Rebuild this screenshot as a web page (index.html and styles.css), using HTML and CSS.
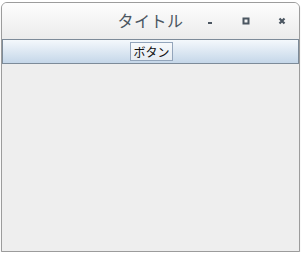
FILE: index.html
```html
<!DOCTYPE html>
<html lang="ja">
<head>
    <meta charset="UTF-8">
    <title>タイトル</title>
    <link rel="stylesheet" href="styles.css">
</head>
<body>
    <div class="window">
        <div class="titlebar">
            <span></span>
            <span class="title">タイトル</span>
            <div class="controls">
                <svg class="ctl" width="8" height="8" viewBox="0 0 8 8"><rect x="2" y="5" width="4" height="2" fill="#4b5661"/></svg>
                <svg class="ctl" width="8" height="8" viewBox="0 0 8 8"><rect x="1.5" y="1.5" width="5" height="5" fill="none" stroke="#4b5661" stroke-width="2"/></svg>
                <svg class="ctl" width="8" height="8" viewBox="0 0 8 8"><path d="M1.5 1.5 L6.5 6.5 M6.5 1.5 L1.5 6.5" stroke="#4b5661" stroke-width="2.2"/></svg>
            </div>
        </div>
        <div class="toolbar">
            <button class="btn">ボタン</button>
        </div>
        <div class="content"></div>
    </div>
</body>
</html>
```

FILE: styles.css
```css
body {
    margin: 0;
    background-color: #ffffff;
    font-family: "Noto Sans CJK JP", "DejaVu Sans", sans-serif;
}

.window {
    margin: 2px 1px 0 1px;
    width: 297px;
    height: 248px;
    border: 1px solid #9c9c9c;
    border-radius: 6px 6px 0 0;
    background-color: #eeeeee;
    box-shadow: 0 1px 1px rgba(0, 0, 0, 0.25);
    display: flex;
    flex-direction: column;
    overflow: hidden;
}

.titlebar {
    height: 36px;
    display: grid;
    grid-template-columns: 1fr auto 1fr;
    align-items: center;
    background: linear-gradient(#fdfdfd, #ebebeb);
}

.title {
    font-size: 16px;
    color: #4b5661;
    letter-spacing: 0.5px;
    line-height: 1;
    padding-bottom: 3px;
}

.controls {
    display: flex;
    justify-content: flex-end;
    align-items: center;
    gap: 28px;
    padding-right: 13px;
}

.ctl {
    display: block;
}

.toolbar {
    height: 23px;
    border: 1px solid #7d8b99;
    background: linear-gradient(#f4f8fc, #c5d7e9);
    display: flex;
    justify-content: center;
    align-items: center;
}

.btn {
    font-family: "Noto Sans CJK JP", "DejaVu Sans", sans-serif;
    font-size: 12px;
    line-height: 1;
    padding: 2px 2px;
    margin-left: 2px;
    height: 19px;
    color: #111111;
    background: linear-gradient(#f7f9fb, #e6ecf2);
    border: 1px solid #93a5bb;
    border-radius: 0;
}

.content {
    flex: 1;
}
```
